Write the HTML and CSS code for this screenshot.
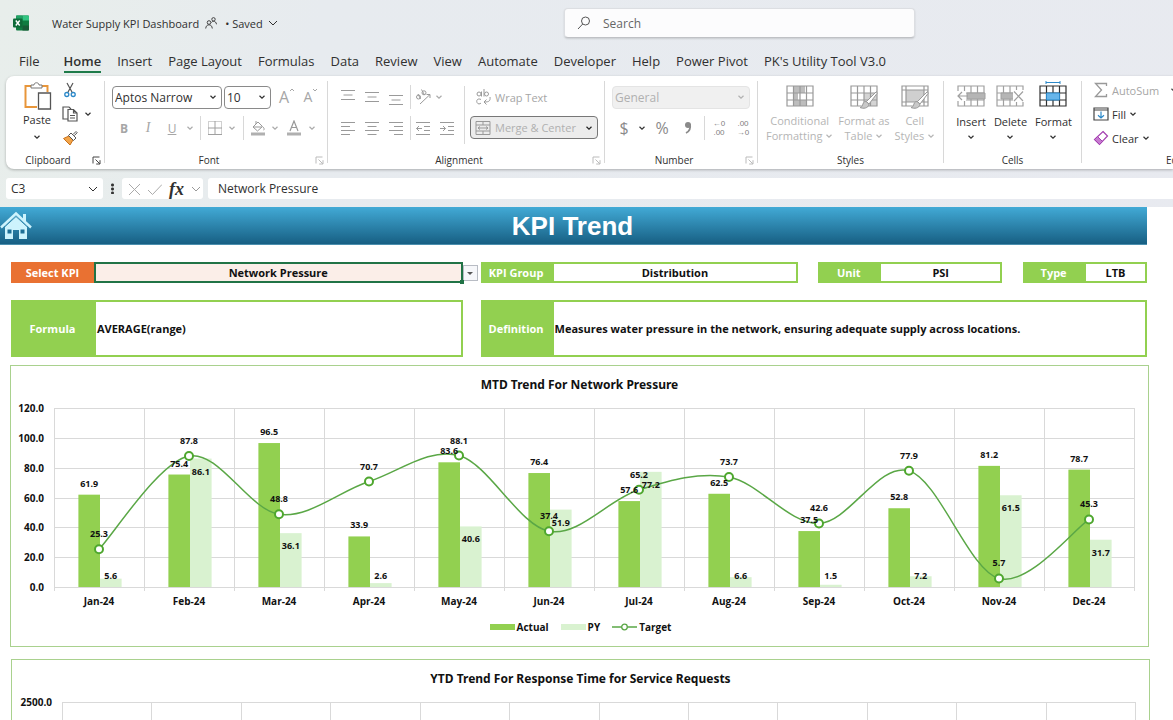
FILE: index.html
```html
<!DOCTYPE html>
<html lang="en">
<head>
<meta charset="utf-8">
<title>Water Supply KPI Dashboard</title>
<meta name="viewport" content="width=device-width, initial-scale=1">
<link rel="stylesheet" href="styles.css">
</head>
<body>
<svg class="defs" aria-hidden="true">
  <symbol id="chev" viewBox="0 0 8 8"><path d="M1.5 2.8 4 5.2 6.500 2.800" fill="none" stroke="currentColor" stroke-width="1.200"/></symbol>
  <symbol id="launch" viewBox="0 0 9 9"><path d="M1 7.500V1H7.500M3.500 3.500 8 8M8 4.200V8H4.200" fill="none" stroke="currentColor"/></symbol>
  <symbol id="table" viewBox="0 0 30 30">
    <path d="M2 5h26v20H2zM2 12h26M2 19h26M8.500 5v20M15 5v20M21.500 5v20" fill="none" stroke="currentColor" stroke-width="1.200"/>
  </symbol>
  <symbol id="brush" viewBox="0 0 20 20">
    <path d="M18.500 1.500 8.500 11.500l2.500 2.500L19 3.500z" fill="#fff" stroke="currentColor"/>
    <path d="M8 11.500c-2.500 0-3 2-3.500 4-.4 1.200-1.500 1.800-2.500 2 3 1.500 8.500 1 9-3.500z" fill="#c9c9c9" stroke="currentColor"/>
  </symbol>
</svg>
<div class="app">
  <header class="titlebar">
    <div class="doc">
      <svg class="logo" viewBox="0 0 16 16" role="img" aria-label="Excel">
        <path d="M4 .5h11a1 1 0 0 1 1 1v13a1 1 0 0 1-1 1H4a1 1 0 0 1-1-1v-13a1 1 0 0 1 1-1z" fill="#107c41"/>
        <path d="M9.500.5H15a1 1 0 0 1 1 1V5.500H9.500z" fill="#33c481"/><path d="M3.200.5h6.300v5H3.200z" fill="#21a366"/>
        <path d="M9.500 10.500H16v4a1 1 0 0 1-1 1H9.500z" fill="#185c37"/>
        <rect y="3.500" width="9.500" height="9" rx="1" fill="#0e6b39"/>
        <path d="M2.800 5.500 6.700 10.500M6.700 5.500 2.800 10.500" stroke="#fff" stroke-width="1.400"/>
      </svg>
      <span class="doc-name">Water Supply KPI Dashboard</span>
      <svg class="people" viewBox="0 0 12 12" fill="none" stroke="#444" aria-hidden="true"><circle cx="4" cy="5.500" r="1.800"/><path d="M.7 11.500C1 9 2.200 7.800 4 7.800S7 9 7.300 11.500"/><circle cx="8.500" cy="2.300" r="1.700"/><path d="M6.500 5.500C7 4.600 7.700 4.300 8.500 4.300c1.600 0 2.700 1 3 3"/></svg>
      <button class="saved" type="button">• Saved <svg viewBox="0 0 10 10"><path d="M1 3l4 4 4-4" fill="none" stroke="currentColor"/></svg></button>
    </div>
    <label class="search">
      <svg viewBox="0 0 14 14" aria-hidden="true"><circle cx="8.500" cy="5" r="4" fill="none" stroke="#555"/><path d="M5.700 8 1 13" stroke="#555"/></svg>
      <input type="search" placeholder="Search" aria-label="Search">
    </label>
  </header>

  <nav class="tabs">
    <a href="#file" class="file">File</a><a href="#home" class="active">Home</a><a href="#insert">Insert</a><a href="#layout">Page Layout</a><a href="#formulas">Formulas</a><a href="#data">Data</a><a href="#review">Review</a><a href="#view">View</a><a href="#automate">Automate</a><a href="#developer">Developer</a><a href="#help">Help</a><a href="#pivot">Power Pivot</a><a href="#utility">PK's Utility Tool V3.0</a>
  </nav>

  <section class="ribbon" aria-label="Ribbon">
    <div class="group g-clip">
      <div class="tools row">
        <button class="big" type="button">
          <svg class="i30" viewBox="0 0 30 30" fill="none"><path d="M9 5H3.500v21H15M20 5h5.500v6" stroke="#e8963a" stroke-width="2"/><path d="M9 7V4h3c0-3 5-3 5 0h3v3z" fill="#fff" stroke="#777"/><path d="M16.500 12h12v16h-12z" fill="#fff" stroke="#555" stroke-width="1.300"/></svg>
          <span>Paste</span><svg class="c8"><use href="#chev"/></svg>
        </button>
        <div class="stack">
          <button type="button" aria-label="Cut"><svg class="i16" viewBox="0 0 16 16" fill="none"><path d="M5 1l5.500 10M11 1 5.500 11" stroke="#555" stroke-width="1.200"/><circle cx="4.800" cy="12.500" r="2" stroke="#2b88c8" stroke-width="1.300"/><circle cx="11.200" cy="12.500" r="2" stroke="#2b88c8" stroke-width="1.300"/></svg></button>
          <button type="button" aria-label="Copy"><svg class="i16" viewBox="0 0 16 16" fill="none" stroke="#555" stroke-width="1.200"><path d="M6 13H1V1h6l2 2"/><path d="M6 3.500h5.500l3.500 3.500v8H6zM11.500 3.500V7H15M8 9.500h5M8 12h5"/></svg><svg class="c8"><use href="#chev"/></svg></button>
          <button type="button" aria-label="Format Painter"><svg class="i16" viewBox="0 0 16 16"><path d="M1.500 8.500 7 6l4 4-3 5z" fill="#f3a54a" stroke="#c9711a"/><path d="M6.500 5.500 9 3l5 5-2.500 2.500z" fill="#fff" stroke="#555"/><path d="M11 4.500 14 1.500l1.200 1.200-3 3" fill="#fff" stroke="#555"/></svg></button>
        </div>
      </div>
      <div class="cap own">Clipboard<svg class="launch dark"><use href="#launch"/></svg></div>
    </div>

    <div class="group g-font">
      <div class="tools col">
        <div class="row r1">
          <span class="pick font"><select aria-label="Font"><option>Aptos Narrow</option></select><svg class="c8"><use href="#chev"/></svg></span>
          <span class="pick size"><select aria-label="Font size"><option>10</option></select><svg class="c8"><use href="#chev"/></svg></span>
          <button class="b24 grow" type="button" disabled>A<svg class="sup" viewBox="0 0 6 6"><path d="M1 4l2-2 2 2" fill="none" stroke="currentColor"/></svg></button>
          <button class="b24 shrink" type="button" disabled>A<svg class="sup" viewBox="0 0 6 6"><path d="M1 2l2 2 2-2" fill="none" stroke="currentColor"/></svg></button>
        </div>
        <div class="row r2">
          <button class="b24 bold" type="button" disabled>B</button><button class="b24 ital" type="button" disabled>I</button><button class="b24 under" type="button" disabled>U</button>
          <svg class="c12"><use href="#chev"/></svg><i class="sep"></i>
          <button class="b20" type="button" disabled aria-label="Borders"><svg class="i16" viewBox="0 0 16 16" fill="none" stroke="#a0a0a0"><path d="M1.500 1.500h13v13h-13z" stroke-dasharray="1 1"/><path d="M8 1v14M1 8h14M1 14.500h14"/></svg></button>
          <svg class="c14"><use href="#chev"/></svg><i class="sep"></i>
          <button class="b20" type="button" disabled aria-label="Fill Color"><svg class="i16" viewBox="0 0 16 16" fill="none" stroke="#999"><path d="M3 7l5-5 4.500 4.500-5 4.500zM6 4V1M3.500 7H12M13 7c1.500 1.500 1.500 3 .5 3"/><path d="M1 14h14" stroke="#b0b0b0" stroke-width="3"/></svg></button>
          <svg class="c14"><use href="#chev"/></svg>
          <button class="b24" type="button" disabled aria-label="Font Color"><svg class="i16" viewBox="0 0 16 16" fill="none" stroke="#999"><path d="M4 11 8 1l4 10M5.500 7.500h5" stroke-width="1.200"/><path d="M1 14h14" stroke="#b0b0b0" stroke-width="3"/></svg></button>
          <svg class="c12"><use href="#chev"/></svg>
        </div>
      </div>
      <div class="cap own">Font<svg class="launch"><use href="#launch"/></svg></div>
    </div>

    <div class="group g-align">
      <div class="tools row">
        <div class="col aligns">
          <div class="row r1">
            <button class="b24" type="button" disabled aria-label="Top Align"><svg class="i16" viewBox="0 0 16 16"><path d="M1 1.500h14M3.500 6h9M1 10.500h14"/></svg></button>
            <button class="b24" type="button" disabled aria-label="Middle Align"><svg class="i16" viewBox="0 0 16 16"><path d="M1 3.500h14M3.500 8h9M1 12.500h14"/></svg></button>
            <button class="b24" type="button" disabled aria-label="Bottom Align"><svg class="i16" viewBox="0 0 16 16"><path d="M1 6.500h14M3.500 11h9M1 15.500h14"/></svg></button>
            <i class="sep"></i>
            <button class="b20" type="button" disabled aria-label="Orientation"><svg class="i16" viewBox="0 0 16 16" fill="none"><circle cx="3.500" cy="8" r="2"/><path d="M5.500 10 3 5M6.500.5 9.500 6"/><circle cx="9" cy="3.800" r="2"/><path d="M5 15 15 5.500M11.500 5.500H15V9"/></svg></button>
            <svg class="c12"><use href="#chev"/></svg>
          </div>
          <div class="row r2">
            <button class="b24" type="button" disabled aria-label="Align Left"><svg class="i16" viewBox="0 0 16 16"><path d="M1 2.500h14M1 6.500h9M1 10.500h14M1 14.500h9"/></svg></button>
            <button class="b24" type="button" disabled aria-label="Center"><svg class="i16" viewBox="0 0 16 16"><path d="M1 2.500h14M3.500 6.500h9M1 10.500h14M3.500 14.500h9"/></svg></button>
            <button class="b24" type="button" disabled aria-label="Align Right"><svg class="i16" viewBox="0 0 16 16"><path d="M1 2.500h14M6 6.500h9M1 10.500h14M6 14.500h9"/></svg></button>
            <i class="sep"></i>
            <button class="b20" type="button" disabled aria-label="Decrease Indent"><svg class="i16" viewBox="0 0 16 16" fill="none"><path d="M1 2.500h14M9 6.500h6M9 10.500h6M1 14.500h14M7 8.500H1.500M4 6 1.500 8.500 4 11"/></svg></button>
            <button class="b28" type="button" disabled aria-label="Increase Indent"><svg class="i16" viewBox="0 0 16 16" fill="none"><path d="M1 2.500h14M9 6.500h6M9 10.500h6M1 14.500h14M1 8.500h5.500M4 6l2.500 2.500L4 11"/></svg></button>
          </div>
        </div>
        <i class="sep tall"></i>
        <div class="col wraps">
          <button class="wrap" type="button" disabled><svg class="i16" viewBox="0 0 16 16" fill="none" stroke="#999"><circle cx="4" cy="5" r="2"/><path d="M6.500 2.500V7.500M9 0v7.500"/><circle cx="11.500" cy="5" r="2"/><path d="M6 10.500c-3-1.500-5 .5-4 3 .8 1.800 3 1.800 4 .5M15 8c.5 4-1 5-5.500 5M11.500 10.500 9 13l2.500 2.500"/></svg>Wrap Text</button>
          <button class="merge" type="button"><svg class="i16" viewBox="0 0 16 16" fill="none" stroke="#999"><path d="M1 1.500h14v13H1zM1 5h14M1 11h14M8 1.500V5M8 11v3.500M3 8h10M5 6.500 3 8l2 1.500M11 6.500 13 8l-2 1.500"/></svg>Merge &amp; Center<svg class="c8"><use href="#chev"/></svg></button>
        </div>
      </div>
      <div class="cap own">Alignment<svg class="launch"><use href="#launch"/></svg></div>
    </div>

    <div class="group g-num">
      <div class="tools col">
        <div class="row r1"><span class="pick off"><select aria-label="Number format" disabled><option>General</option></select><svg class="c8"><use href="#chev"/></svg></span></div>
        <div class="row r2">
          <button class="b24 sym" type="button" disabled>$</button><svg class="c12 on"><use href="#chev"/></svg>
          <button class="b28 sym" type="button" disabled>%</button>
          <button class="b24" type="button" disabled aria-label="Comma Style"><svg class="i16" viewBox="0 0 16 16"><circle cx="8" cy="5" r="3" fill="#8a8a8a" stroke="none"/><path d="M10 4.500c.8 4-.8 7-4 8.500" fill="none" stroke="#8a8a8a" stroke-width="1.800"/></svg></button>
          <i class="sep"></i>
          <button class="b20 dec" type="button" disabled><span>←0</span><span>.00</span></button>
          <button class="b28 dec" type="button" disabled><span>.00</span><span>→0</span></button>
        </div>
      </div>
      <div class="cap own">Number<svg class="launch"><use href="#launch"/></svg></div>
    </div>

    <div class="group g-style">
      <div class="tools row">
        <button class="big two" type="button" disabled><svg class="i30" viewBox="0 0 30 30"><path d="M9 5h11v7h-7v7h8v6H9z" fill="#bdbdbd"/><use href="#table"/></svg><span>Conditional<br>Formatting <svg class="c8"><use href="#chev"/></svg></span></button>
        <button class="big two" type="button" disabled><svg class="i30" viewBox="0 0 30 30"><path d="M15 12h13v13H15z" fill="#d4d4d4"/><use href="#table"/><use href="#brush" x="9" y="9" width="20" height="20"/></svg><span>Format as<br>Table <svg class="c8"><use href="#chev"/></svg></span></button>
        <button class="big two" type="button" disabled><svg class="i30" viewBox="0 0 30 30"><path d="M6 9h18v12H6z" fill="#cfcfcf"/><path d="M2 5h26v20H2zM6 5v20M24 5v20M2 9h26M2 21h26" fill="none" stroke="currentColor" stroke-width="1.200"/><use href="#brush" x="9" y="9" width="20" height="20"/></svg><span>Cell<br>Styles <svg class="c8"><use href="#chev"/></svg></span></button>
      </div>
      <div class="cap">Styles</div>
    </div>

    <div class="group g-cells">
      <div class="tools row">
        <button class="big" type="button"><svg class="i30 dim" viewBox="0 0 30 30"><use href="#table"/><path d="M11 12h18v6H11z" fill="#b5b5b5" stroke="currentColor"/><path d="M1 10h9v10H1z" fill="#fff"/><path d="M12 15H2M6 11l-4 4 4 4" fill="none" stroke="currentColor" stroke-width="1.200"/></svg><span>Insert</span><svg class="c8"><use href="#chev"/></svg></button>
        <button class="big" type="button"><svg class="i30 dim" viewBox="0 0 30 30"><use href="#table"/><path d="M6 12h13v6H6z" fill="#b5b5b5" stroke="currentColor"/><path d="M18 9h11v12H18z" fill="#fff"/><path d="M19 10.500 28 20M28 10.500 19 20" stroke="currentColor" stroke-width="1.200"/></svg><span>Delete</span><svg class="c8"><use href="#chev"/></svg></button>
        <button class="big" type="button"><svg class="i30" viewBox="0 0 30 30"><use href="#table"/><path d="M8.500 12h13v7h-13z" fill="#67b5ea" stroke="#2b88c8"/><path d="M8 1.500h14M8 0v3M22 0v3" stroke="#2b88c8"/></svg><span>Format</span><svg class="c8"><use href="#chev"/></svg></button>
      </div>
      <div class="cap">Cells</div>
    </div>

    <div class="group g-edit">
      <div class="tools col lines">
        <button class="auto" type="button" disabled><svg class="i16" viewBox="0 0 16 16"><path d="M13.500 4V1.500h-11L8.500 8l-6 6.500h11V12" fill="none" stroke="#999" stroke-width="1.300"/></svg>AutoSum<svg class="c8 on"><use href="#chev"/></svg></button>
        <button type="button"><svg class="i16" viewBox="0 0 16 16" fill="none"><path d="M1 2h14v12H1zM1 4h14" stroke="#444" stroke-width="1.200"/><path d="M8 5.500v6.500M5 9.300 8 12l3-2.700" stroke="#2b88c8" stroke-width="1.200"/></svg>Fill <svg class="c8"><use href="#chev"/></svg></button>
        <button type="button"><svg class="i16" viewBox="0 0 16 16"><path d="M10 1.500 14.500 6 6.500 14.500 1.500 9.500z" fill="#fff" stroke="#a33fb0" stroke-width="1.200"/><path d="M4.500 6.500l5 5-3 3-5-5z" fill="#c77bd0" stroke="#a33fb0"/></svg>Clear <svg class="c8"><use href="#chev"/></svg></button>
      </div>
      <div class="cap">Editing</div>
    </div>
  </section>

  <section class="formula-bar" aria-label="Formula bar">
    <div class="namebox"><input value="C3" aria-label="Name box"><button type="button" aria-label="Names"><svg viewBox="0 0 10 10"><path d="M1 3l4 4 4-4" fill="none" stroke="currentColor"/></svg></button></div>
    <i class="dots"></i>
    <div class="fx">
      <button type="button" aria-label="Cancel"><svg class="i14" viewBox="0 0 14 14"><path d="M2 2l11 11M13 2 2 13" stroke="#aaa"/></svg></button>
      <button type="button" aria-label="Enter"><svg class="i14" viewBox="0 0 14 14"><path d="M0 8l4.500 4.500L14 2.500" fill="none" stroke="#aaa"/></svg></button>
      <button type="button" class="fn">fx</button>
      <svg class="i10" viewBox="0 0 10 10"><path d="M1 3l4 4 4-4" fill="none" stroke="#999"/></svg>
    </div>
    <input class="formula" value="Network Pressure" aria-label="Formula">
  </section>

  <main class="sheet">
    <div class="banner">
      <a href="#home" class="home" aria-label="Home"><svg viewBox="0 0 32 30"><path d="M5 15 16 5l11 10v13h-8v-9h-6v9H5z" fill="#cdf3fd"/><path d="M23 3h3v8l-3-3z" fill="#cdf3fd"/><path d="M1 16.500 16 2.500l15 14" fill="none" stroke="#cdf3fd" stroke-width="2.400"/><path d="M3.500 17 16 5.500 28.500 17" fill="none" stroke="#3187ad" stroke-width="1"/><path d="M7.500 18.500h4v4h-4zM20.500 18.500h4v4h-4z" fill="#1d6f96"/></svg></a>
      <h1>KPI Trend</h1>
    </div>

    <div class="fields">
      <label class="tag orange" for="kpi">Select KPI</label>
      <div class="cell picked"><select id="kpi"><option>Network Pressure</option><option>Response Time for Service Requests</option></select></div>
      <span class="drop" aria-hidden="true"></span>
      <span class="tag">KPI Group</span><span class="cell">Distribution</span>
      <span class="tag unit">Unit</span><span class="cell">PSI</span>
      <span class="tag type">Type</span><span class="cell">LTB</span>
    </div>
    <div class="fields tall">
      <span class="tag">Formula</span><span class="cell text">AVERAGE(range)</span>
      <span class="tag def">Definition</span><span class="cell text rest">Measures water pressure in the network, ensuring adequate supply across locations.</span>
    </div>

    <section class="chart">
      <h2>MTD Trend For Network Pressure</h2>
      <div class="plot" id="mtd"></div>
      <div class="legend">
        <span><i class="key actual"></i>Actual</span>
        <span><i class="key py"></i>PY</span>
        <span><svg class="key-line" viewBox="0 0 25 8"><path d="M0 4h25" stroke="#5aa746" stroke-width="1.500"/><circle cx="12.500" cy="4" r="2.800" fill="#fff" stroke="#5aa746" stroke-width="1.300"/></svg>Target</span>
      </div>
    </section>
    <section class="chart second">
      <h2>YTD Trend For Response Time for Service Requests</h2>
      <div class="plot" id="ytd"></div>
    </section>
  </main>
</div>
<script src="chart.js"></script>
</body>
</html>
```
FILE: styles.css
```css
* { box-sizing: border-box; }
body { margin: 0; background: #fff; font-family: "Open Sans", "Noto Sans", sans-serif; font-size: 12px; color: #303030; }
button, input, select { font: inherit; color: inherit; background: none; border: 0; padding: 0; margin: 0; }
button { display: inline-flex; align-items: center; justify-content: center; white-space: nowrap; }
select { appearance: none; }
svg { flex: none; }
.defs { position: absolute; width: 0; height: 0; }
.app { display: flex; flex-direction: column; height: 100vh; overflow: hidden; background: linear-gradient(100deg, #e8eeeb 0, #e7ebef 25%, #e8eaf0 100%); }
.titlebar, .tabs, .ribbon, .formula-bar { flex: none; }
.row { display: flex; align-items: center; }
.col { display: flex; flex-direction: column; }

/* title bar */
.titlebar { display: grid; grid-template-columns: 564fr 351fr 258fr; align-items: center; height: 46px; }
.doc { display: flex; align-items: center; padding-left: 13px; font-size: 11px; }
.logo { width: 16px; height: 16px; margin-right: 23px; }
.people { width: 12px; height: 12px; margin: 0 8px 0 6px; }
.saved svg { width: 10px; height: 10px; margin-left: 5px; }
.search { display: flex; align-items: center; gap: 12px; height: 30px; padding: 0 12px; background: #fcfcfd; border-radius: 4px; border: 1px solid #dcdee2; border-bottom-color: #bfc1c5; box-shadow: 0 1px 2px #0002; }
.search svg { width: 14px; height: 14px; }
.search input { flex: 1; min-width: 0; outline: 0; }
.search input::placeholder { color: #666; opacity: 1; }

/* tabs */
.tabs { display: flex; gap: 16px; height: 30px; padding-left: 19px; font-size: 13px; }
.tabs a { height: 27px; line-height: 30px; color: #303030; text-decoration: none; white-space: nowrap; }
.tabs .file { margin-right: 8px; }
.tabs .active { font-weight: 600; border-bottom: 2px solid #1e7b4a; }

/* ribbon */
.ribbon { display: flex; margin-left: 6px; height: 93px; background: #fff; border-radius: 8px 0 0 8px; box-shadow: 0 1px 3px #0004; overflow: hidden; }
.group { flex: none; display: flex; flex-direction: column; margin: 5px 0 6px; border-right: 1px solid #d8d8d8; color: #303030; }
.tools { flex: 1; }
.cap { position: relative; height: 16px; margin-bottom: -5px; line-height: 16px; font-size: 10px; text-align: center; }
.cap.own { padding-right: 14px; }
.launch { position: absolute; right: 3px; top: 4px; width: 9px; height: 9px; color: #bbb; }
.launch.dark { color: #444; }
.c8, .c12, .c14 { width: 8px; height: 8px; }
.c12 { width: 12px; padding: 0 2px; color: #aaa; }
.c14 { width: 14px; padding: 0 3px; color: #aaa; }
.on { color: #333; }
.i16 { width: 16px; height: 16px; }
.i30 { width: 30px; height: 30px; }
.i14 { width: 14px; height: 14px; }
.i10 { width: 10px; height: 10px; }
.b20 { width: 20px; }
.b24 { width: 24px; }
.b28 { width: 28px; }
.sep { width: 1px; height: 24px; margin: 0 4px; background: #d8d8d8; }
.sep.tall { height: 58px; }
button:disabled { color: #a6a6a6; }
.g-clip { width: 99px; }
.g-font { width: 223px; }
.g-align { width: 277px; }
.g-num { width: 153px; }
.g-style { width: 186px; }
.g-cells { width: 138px; }
.g-edit { width: 200px; border: 0; }
.big { flex-direction: column; font-size: 11px; line-height: 15px; }
.big > .c8 { margin-top: 4px; }
.g-clip .tools { padding-left: 15px; align-items: flex-start; }
.g-clip .big { width: 32px; line-height: 18px; }
.stack { display: flex; flex-direction: column; gap: 8px; margin: 1px 0 0 9px; align-items: flex-start; }
.stack button { gap: 6px; }
.r1 { height: 22px; margin-top: 5px; }
.r2 { height: 24px; margin-top: 8px; }
.g-font .tools, .g-num .tools { padding-left: 7px; }
.g-align .tools { padding-left: 8px; }
.pick { display: flex; align-items: center; height: 23px; padding: 0 4px 0 2px; border: 1px solid #8a8a8a; border-radius: 4px; margin-right: 2px; }
.pick select { flex: 1; min-width: 0; height: 20px; font-size: 12px; }
.pick.font { width: 110px; }
.pick.size { width: 47px; }
.pick.off { width: 138px; background: #f0f0f0; border-color: #e4e4e4; color: #b0b0b0; }
.pick.off select { color: #b0b0b0; opacity: 1; }
.grow { font-size: 16px; margin-left: 2px; }
.shrink { font-size: 14px; }
.grow, .shrink { align-items: flex-start; line-height: 20px; }
.sup { width: 6px; height: 6px; }
.bold { font-weight: 700; }
.ital { font-style: italic; font-family: "Liberation Serif", serif; font-size: 14px; }
.under { text-decoration: underline; }
.sym { font-size: 16px; }
.g-num button.sym { color: #8a8a8a; }
.aligns path, .aligns circle { stroke: #9a9a9a; }
.g-align .tools { align-items: flex-start; }
.aligns { width: 126px; }
.aligns .sep { margin: 0 2px; }
.g-align .sep.tall { margin: 5px 5px 0 2px; }
.wrap, .merge { gap: 4px; }
.wrap { justify-content: flex-start; height: 22px; margin-top: 5px; padding-left: 5px; font-size: 11px; }
.merge { width: 128px; height: 23px; margin-top: 8px; padding: 0 4px; justify-content: flex-start; font-size: 11px; color: #b0b0b0; background: #ececec; border: 1px solid #777; border-radius: 4px; }
.merge .c8 { margin-left: auto; color: #222; }
.dec { flex-direction: column; font: 8px/9px "Liberation Sans", sans-serif; }
.g-num button.dec { color: #808080; }
.g-style .tools, .g-cells .tools { align-items: flex-start; }
.g-style .tools { padding-left: 8px; justify-content: space-between; padding-right: 8px; }
.g-style .i30 { color: #999; }
.two span { margin-top: 2px; color: #b5b5b5; }
.g-cells .tools { padding: 0 9px 0 12px; justify-content: space-between; }
.g-cells .big span { margin-top: 3px; }
.dim { color: #a0a0a0; }
.lines { align-items: flex-start; padding-left: 11px; gap: 8px; margin-top: 1px; }
.lines button { gap: 3px; font-size: 11px; height: 16px; }
.auto .on { margin-left: 8px; }

/* formula bar */
.formula-bar { display: flex; align-items: stretch; height: 21px; margin: 9px 0 8px 6px; color: #303030; }
.namebox, .fx { display: flex; align-items: center; background: #fff; border-radius: 3px; }
.namebox { width: 97px; padding: 0 5px; }
.namebox input { flex: 1; min-width: 0; }
.namebox svg { width: 10px; height: 10px; }
.dots { width: 3px; margin: 5px 8px; background: radial-gradient(circle, #333 1px, transparent 2px) 0 0 / 3px 4px; }
.fx { width: 81px; padding: 0 2px 0 5px; justify-content: space-between; }
.fn { font: italic 700 18px/18px "Liberation Serif", serif; }
.formula { flex: 1; min-width: 0; margin-left: 5px; padding-left: 10px; background: #fff; border-radius: 3px 0 0 3px; }

/* worksheet */
.sheet { flex: 1; min-height: 0; overflow-y: auto; scrollbar-width: none; background: #fff; font-weight: 700; color: #111; }
.banner { display: flex; align-items: center; height: 38px; margin-right: 26px; background: linear-gradient(#42aad6, #175f83); border-bottom: 1px solid #4b8fae; }
.home { width: 32px; height: 30px; }
.home svg { display: block; width: 32px; height: 30px; }
h1 { flex: 1; margin: 0 34px 0 0; text-align: center; color: #fff; font: 700 26px/36px "Liberation Sans", sans-serif; }
.fields { display: grid; grid-template-columns: 83fr 369fr 18fr 71fr 247fr 20fr 61fr 123fr 21fr 61fr 63fr; height: 21px; margin: 17px 26px 0 11px; font-size: 11px; }
.fields.tall { height: 57px; }
.tag { display: flex; align-items: center; justify-content: center; background: #92d050; color: #fff; white-space: nowrap; }
.orange { background: #e97132; }
.cell { display: flex; align-items: center; justify-content: center; border: 2px solid #92d050; min-width: 0; }
.picked { position: relative; background: #fbeee8; border-color: #217346; }
.picked::after { content: ""; position: absolute; right: -3px; bottom: -3px; width: 4px; height: 4px; background: #217346; }
.picked select { width: 100%; height: 17px; text-align: center; text-align-last: center; }
.drop { width: 15px; height: 16px; margin-top: 3px; border: 1px solid #b8bcc4; background: #f6f7fa; display: grid; place-items: center; }
.drop::after { content: ""; border: 3px solid transparent; border-top-color: #555; border-bottom: 0; }
.unit { grid-column: 7; }
.type { grid-column: 10; }
.def { grid-column: 4; }
.rest { grid-column: 5 / -1; }
.text { justify-content: flex-start; padding-left: 1px; }

/* charts */
.chart { margin: 8px 24px 0 10px; height: 282px; border: 1px solid #a9d18e; background: #fff; }
.chart.second { margin: 12px 23px 0 11px; }
h2 { margin: 10px 0 0; font: 700 12px/18px "Noto Sans", "Open Sans", sans-serif; text-align: center; }
.chart h2 + .plot { margin-top: 4px; }
.plot svg { display: block; width: 100%; }
.plot text { font: 700 9px "Open Sans", "Noto Sans", sans-serif; fill: #111; text-anchor: middle; }
.plot .axis { font-size: 10px; text-anchor: end; }
.plot .cat { font-size: 10px; }
.grid { stroke: #d9d9d9; fill: none; }
.bar-actual, .actual { fill: #92d050; background: #92d050; }
.bar-py, .py { fill: #d9f2d0; background: #d9f2d0; }
.line { fill: none; stroke: #5aa746; stroke-width: 1.5; }
.dot { fill: #fff; stroke: #4ea72e; stroke-width: 2; }
.legend { display: flex; justify-content: center; gap: 12px; height: 16px; margin-top: 11px; padding-left: 2px; font-size: 10px; line-height: 16px; }
.legend span { display: flex; align-items: center; gap: 2px; }
.key { width: 25px; height: 6px; }
.key-line { width: 25px; height: 8px; }
```
FILE: chart.js
```js
const months = ["Jan", "Feb", "Mar", "Apr", "May", "Jun", "Jul", "Aug", "Sep", "Oct", "Nov", "Dec"];
const mtd = {
  max: 120, step: 20, left: 43, right: 14,
  actual: [61.9, 75.4, 96.5, 33.9, 83.6, 76.4, 57.6, 62.5, 37.5, 52.8, 81.2, 78.7],
  py: [5.6, 86.1, 36.1, 2.6, 40.6, 51.9, 77.2, 6.6, 1.5, 7.2, 61.5, 31.7],
  target: [25.3, 87.8, 48.8, 70.7, 88.1, 37.4, 65.2, 73.7, 42.6, 77.9, 5.7, 45.3]
};
const ytd = { max: 2500, step: 500, left: 50, right: 14, actual: [], py: [], target: [] };

const top0 = 10, plotH = 179, height = 210;

function draw(id, d) {
  const host = document.getElementById(id);
  const w = host.clientWidth;
  const slot = (w - d.left - d.right) / 12;
  const y = v => top0 + plotH * (1 - v / d.max);
  const base = y(0);
  const mid = i => d.left + slot * (i + 0.5);
  const barW = slot * 0.24;
  const text = (x, yy, s, c = "") => `<text class="${c}" x="${x}" y="${yy}">${s}</text>`;
  let out = "";

  let grid = "";
  for (let v = 0; v <= d.max; v += d.step) {
    grid += `M${d.left} ${Math.round(y(v)) + 0.5}H${w - d.right}`;
    out += text(d.left - 10, y(v) + 4, v.toFixed(1), "axis");
  }
  for (let i = 0; i <= 12; i++) grid += `M${Math.round(d.left + slot * i) + 0.5} ${top0}V${base + 4}`;
  out += `<path class="grid" d="${grid}"/>`;

  const bar = (c, x, v) => `<rect class="${c}" x="${x}" y="${y(v)}" width="${barW}" height="${base - y(v)}"/>`;
  d.actual.forEach((v, i) => out += bar("bar-actual", mid(i) - barW + 1, v));
  d.py.forEach((v, i) => out += bar("bar-py", mid(i) + 1, v));

  const p = d.target.map((v, i) => [mid(i), y(v)]);
  if (p.length) {
    let path = `M${p[0]}`;
    for (let i = 0; i < p.length - 1; i++) {
      const a = p[i - 1] || p[i], b = p[i], c = p[i + 1], e = p[i + 2] || c;
      path += `C${b[0] + (c[0] - a[0]) / 6} ${b[1] + (c[1] - a[1]) / 6} ${c[0] - (e[0] - b[0]) / 6} ${c[1] - (e[1] - b[1]) / 6} ${c}`;
    }
    out += `<path class="line" d="${path}"/>`;
    p.forEach(q => out += `<circle class="dot" cx="${q[0]}" cy="${q[1]}" r="4"/>`);
  }

  d.actual.forEach((v, i) => out += text(mid(i) - barW / 2 + 1, y(v) - 8, v.toFixed(1)));
  d.py.forEach((v, i) => out += text(mid(i) + barW / 2 + 1, Math.min(y(v) + 16, base - 8), v.toFixed(1)));
  d.target.forEach((v, i) => out += text(mid(i), y(v) - 12, v.toFixed(1)));
  months.forEach((m, i) => out += text(mid(i), base + 18, m + "-24", "cat"));
  host.innerHTML = `<svg height="${height}" viewBox="0 0 ${w} ${height}">${out}</svg>`;
}

function drawAll() { draw("mtd", mtd); draw("ytd", ytd); }
drawAll();
addEventListener("resize", drawAll);
```
